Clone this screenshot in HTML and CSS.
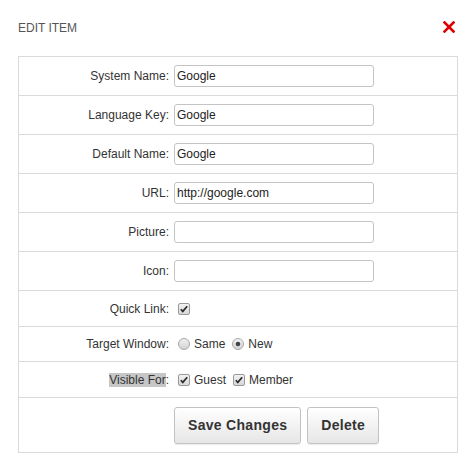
FILE: index.html
```html
<!DOCTYPE html>
<html>
<head>
<meta charset="utf-8">
<link rel="stylesheet" href="styles.css">
</head>
<body>
<div class="dialog">
  <div class="header">
    <span class="title">EDIT ITEM</span>
    <svg class="close" width="12" height="12" viewBox="0 0 12 12"><path d="M1.5 1.5 L10.5 10.5 M10.5 1.5 L1.5 10.5" stroke="#e00000" stroke-width="2.6" stroke-linecap="square"/></svg>
  </div>
  <div class="box">
    <div class="row"><span class="label">System Name:</span><div class="field"><input class="text" type="text" value="Google"></div></div>
    <div class="row"><span class="label">Language Key:</span><div class="field"><input class="text" type="text" value="Google"></div></div>
    <div class="row"><span class="label">Default Name:</span><div class="field"><input class="text" type="text" value="Google"></div></div>
    <div class="row"><span class="label">URL:</span><div class="field"><input class="text" type="text" value="http://google.com"></div></div>
    <div class="row"><span class="label">Picture:</span><div class="field"><input class="text" type="text" value=""></div></div>
    <div class="row"><span class="label">Icon:</span><div class="field"><input class="text" type="text" value=""></div></div>
    <div class="row short"><span class="label">Quick Link:</span>
      <div class="field opts">
        <span class="opt"><svg class="cb" width="12" height="12" viewBox="0 0 12 12"><defs><linearGradient id="g1" x1="0" y1="0" x2="0" y2="1"><stop offset="0" stop-color="#f4f4f4"/><stop offset="1" stop-color="#d6d6d6"/></linearGradient></defs><rect x="0.5" y="0.5" width="11" height="11" rx="1.5" fill="url(#g1)" stroke="#9a9a9a"/><path d="M2.8 6.2 L4.8 8.4 L9.2 3.2" fill="none" stroke="#2b2b2b" stroke-width="1.7"/></svg></span>
      </div>
    </div>
    <div class="row r8"><span class="label">Target Window:</span>
      <div class="field opts">
        <span class="opt"><svg class="rd" width="12" height="12" viewBox="0 0 12 12"><defs><linearGradient id="g2" x1="0" y1="0" x2="0" y2="1"><stop offset="0" stop-color="#f2f2f2"/><stop offset="1" stop-color="#d2d2d2"/></linearGradient></defs><circle cx="6" cy="6" r="5.5" fill="url(#g2)" stroke="#a8a8a8"/></svg>Same</span>
        <span class="opt"><svg class="rd" width="12" height="12" viewBox="0 0 12 12"><circle cx="6" cy="6" r="5.5" fill="url(#g2)" stroke="#a8a8a8"/><circle cx="6" cy="6" r="2.3" fill="#444"/></svg>New</span>
      </div>
    </div>
    <div class="row short"><span class="label"><span class="hl">Visible For</span>:</span>
      <div class="field opts">
        <span class="opt"><svg class="cb" width="12" height="12" viewBox="0 0 12 12"><rect x="0.5" y="0.5" width="11" height="11" rx="1.5" fill="url(#g1)" stroke="#9a9a9a"/><path d="M2.8 6.2 L4.8 8.4 L9.2 3.2" fill="none" stroke="#2b2b2b" stroke-width="1.7"/></svg>Guest</span>
        <span class="opt"><svg class="cb" width="12" height="12" viewBox="0 0 12 12"><rect x="0.5" y="0.5" width="11" height="11" rx="1.5" fill="url(#g1)" stroke="#9a9a9a"/><path d="M2.8 6.2 L4.8 8.4 L9.2 3.2" fill="none" stroke="#2b2b2b" stroke-width="1.7"/></svg>Member</span>
      </div>
    </div>
    <div class="row actions"><span class="label"></span>
      <div class="field buttons">
        <button class="btn">Save Changes</button>
        <button class="btn">Delete</button>
      </div>
    </div>
  </div>
</div>
</body>
</html>
```
FILE: styles.css
```css
html, body {
  margin: 0;
  padding: 0;
  background: #fff;
}
body {
  font-family: "Liberation Sans", Arial, sans-serif;
  font-size: 12px;
  color: #333;
}
.dialog {
  width: 476px;
  padding: 0 18px;
  box-sizing: border-box;
}
.header {
  height: 56px;
  display: flex;
  align-items: center;
  justify-content: space-between;
  padding-right: 3px;
}
.title {
  color: #555;
  font-size: 12px;
}
.close {
  display: block;
  margin-top: -3px;
}
.box {
  border: 1px solid #dadada;
}
.row {
  display: grid;
  grid-template-columns: 155px 1fr;
  align-items: center;
  height: 38px;
  border-top: 1px solid #dadada;
}
.row:first-child {
  border-top: none;
}
.row.short {
  height: 35px;
}
.row.r8 {
  height: 34px;
}
.row.actions {
  height: 54px;
}
.label {
  text-align: right;
  padding-right: 5px;
}
.hl {
  background: #c6c6c6;
}
.field {
  display: flex;
  align-items: center;
}
.text {
  width: 200px;
  height: 22px;
  box-sizing: border-box;
  border: 1px solid #c4c4c4;
  border-radius: 3px;
  padding: 0 2px;
  margin: 0;
  font-family: "Liberation Sans", Arial, sans-serif;
  font-size: 12px;
  color: #222;
  background: #fff;
  outline: none;
}
.opts {
  padding-left: 4px;
}
.opt {
  display: inline-flex;
  align-items: center;
  gap: 4px;
  margin-right: 7px;
}
.opt svg {
  display: block;
}
.buttons {
  gap: 6px;
}
.btn {
  height: 37px;
  padding: 0 13px;
  font-family: "Liberation Sans", Arial, sans-serif;
  font-size: 14px;
  font-weight: bold;
  letter-spacing: 0.3px;
  color: #333;
  border: 1px solid #c2c2c2;
  border-radius: 3px;
  background: linear-gradient(#ffffff, #e6e6e6);
  box-shadow: 0 1px 1px rgba(0,0,0,0.08);
  margin: 0;
}
```
